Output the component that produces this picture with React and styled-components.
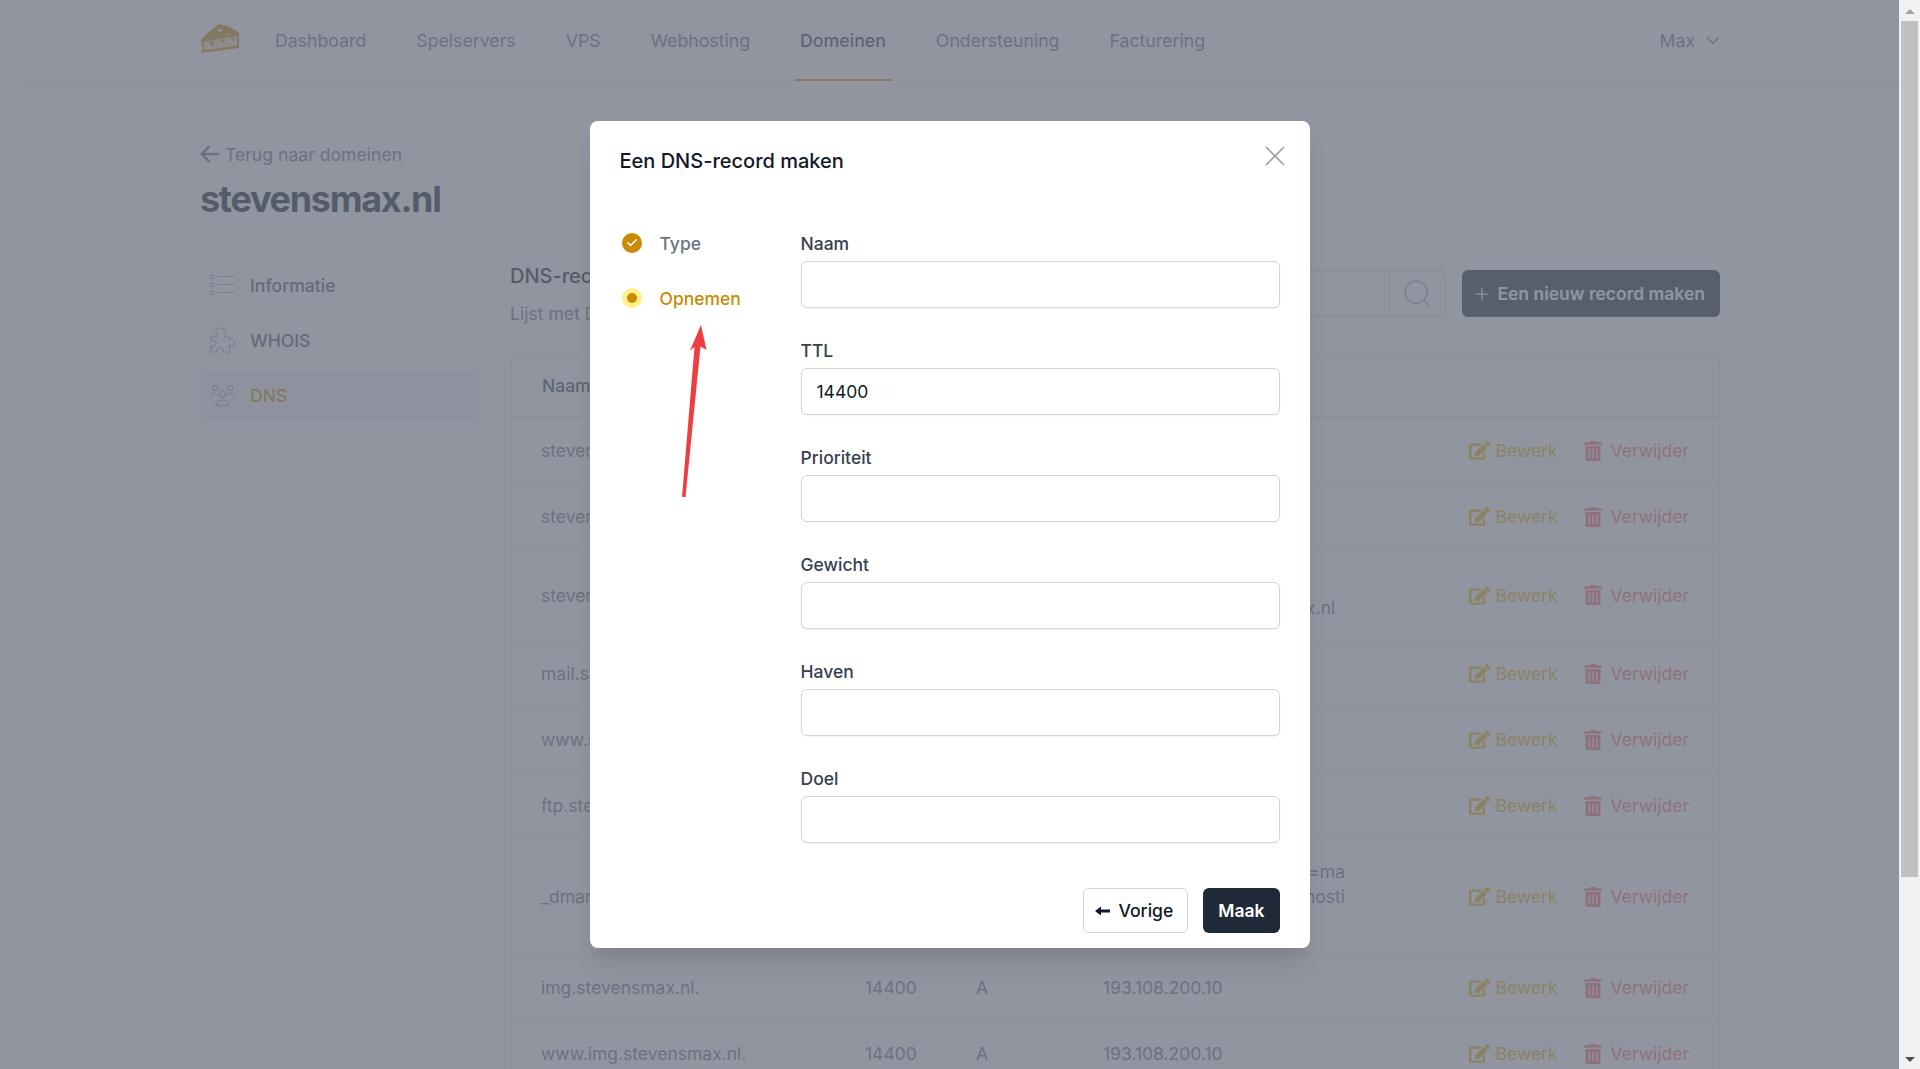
import React from "react";
import styled, { createGlobalStyle } from "styled-components";
import { Check, Plus, Search, X } from "lucide-react";
import { FaEdit, FaTrashAlt } from "react-icons/fa";
import { HiArrowLeft } from "react-icons/hi";

const GlobalStyle = createGlobalStyle`
  * { box-sizing: border-box; }
  html, body { margin: 0; padding: 0; height: 100%; overflow: hidden; }
  body {
    font-family: Inter, "Liberation Sans", sans-serif;
    font-size: 17.5px;
    color: #111827;
    background: #ffffff;
  }
`;

const Root = styled.div`
  display: flex;
  height: 100vh;
  overflow: hidden;
`;

const Page = styled.div`
  position: relative;
  flex: 1;
  min-width: 0;
  overflow: hidden;
`;

const Nav = styled.nav`
  display: flex;
  justify-content: space-between;
  height: 81px;
  margin-left: 21px;
  padding: 0 179px 0 180px;
  border-bottom: 1px solid #e5e7eb;
`;

const NavLeft = styled.div`
  display: flex;
  align-items: stretch;
  gap: 40px;
`;

const LogoLink = styled.a`
  display: flex;
  align-items: center;
  width: 38px;
  margin-right: -9px;
  padding-bottom: 3px;
`;

const NavItem = styled.a`
  display: flex;
  align-items: center;
  padding: 2px 5px 0;
  font-size: 17.72px;
  color: ${({ $active }) => ($active ? "#374151" : "#6b7280")};
  font-weight: ${({ $active }) => ($active ? 500 : 400)};
  border-bottom: 2px solid ${({ $active }) => ($active ? "#ca8a04" : "transparent")};
  margin-bottom: -1px;
`;

const UserMenu = styled.div`
  display: flex;
  align-items: center;
  gap: 11px;
  font-size: 17.6px;
  color: #6b7280;
`;

const Content = styled.main`
  padding: 61px 179px 0 201px;
`;

const BackLink = styled.a`
  display: flex;
  align-items: center;
  gap: 3px;
  height: 24px;
  margin-left: -3px;
  font-size: 17.6px;
  color: #6b7280;
`;

const Title = styled.h1`
  margin: 13px 0 0 -1px;
  font-size: 36px;
  line-height: 40px;
  font-weight: 700;
  letter-spacing: -1.3px;
  color: #111827;
`;

const Columns = styled.div`
  display: flex;
  gap: 31px;
  margin-top: 43px;
`;

const Sidebar = styled.aside`
  display: flex;
  flex-direction: column;
  gap: 7px;
  width: 279px;
  flex-shrink: 0;
`;

const SideItem = styled.a`
  display: flex;
  align-items: center;
  height: 48px;
  padding: 0 0 2px 9px;
  border-radius: 6px;
  font-size: 17.6px;
  font-weight: 500;
  color: ${({ $active }) => ($active ? "#ca8a04" : "#4b5563")};
  background: ${({ $active }) => ($active ? "#f3f4f6" : "transparent")};
`;

const SideIcon = styled.span`
  display: flex;
  width: 40px;
  color: #9ca3af;
`;

const MainCol = styled.section`
  flex: 1;
  min-width: 0;
`;

const MainHead = styled.div`
  display: flex;
  justify-content: space-between;
  align-items: flex-start;
`;

const MainTitle = styled.h2`
  margin: 0 0 0 -1px;
  font-size: 20px;
  line-height: 28px;
  font-weight: 500;
  color: #111827;
`;

const MainSub = styled.p`
  margin: 12px 0 0 -1px;
  font-size: 17.6px;
  line-height: 24px;
  color: #6b7280;
`;

const HeadActions = styled.div`
  display: flex;
  gap: 16px;
  margin-top: 8px;
`;

const SearchGroup = styled.div`
  display: flex;
  height: 47px;
  border: 1px solid #d1d5db;
  border-radius: 6px;
`;

const SearchInput = styled.input`
  width: 200px;
  border: 0;
  background: transparent;
`;

const SearchButton = styled.button`
  display: flex;
  align-items: center;
  justify-content: center;
  width: 56px;
  border: 0;
  border-left: 1px solid #d1d5db;
  background: transparent;
  color: #9ca3af;
  padding: 0;
`;

const PrimaryButton = styled.button`
  display: flex;
  align-items: center;
  gap: 5px;
  height: 47px;
  padding: 0 15px 0 10px;
  border: 0;
  border-radius: 6px;
  background: #1f2937;
  color: #ffffff;
  font-family: inherit;
  font-size: 17.5px;
  font-weight: 600;
`;

const Table = styled.div`
  margin-top: 28px;
  border: 1px solid #e5e7eb;
  border-radius: 8px;
`;

const GRID = "323px 111px 127px 1fr 232px";

const HeadRow = styled.div`
  display: grid;
  grid-template-columns: ${GRID};
  align-items: center;
  height: 63px;
  padding: 0 30px 2px;
  border-bottom: 1px solid #d1d5db;
  font-weight: 500;
  color: #374151;
`;

const Row = styled.div`
  display: grid;
  grid-template-columns: ${GRID};
  align-items: center;
  padding: 20px 30px;
  border-bottom: 1px solid #e5e7eb;
  line-height: 25px;
  color: #6b7280;
`;

const NameCell = styled.span`
  margin-left: -1px;
`;

const ValueCell = styled.div`
  width: 242px;
  white-space: nowrap;
`;

const ValueLine = styled.div`
  text-align: ${({ $end }) => ($end ? "right" : "left")};
`;

const Actions = styled.div`
  display: flex;
  align-items: center;
  justify-content: flex-end;
  gap: 25px;
`;

const Action = styled.a`
  display: flex;
  align-items: center;
  gap: ${({ $danger }) => ($danger ? "8px" : "6px")};
  color: ${({ $danger }) => ($danger ? "#f87171" : "#eab308")};
`;

const Overlay = styled.div`
  position: absolute;
  inset: 0;
  display: flex;
  justify-content: center;
  align-items: flex-start;
  padding-top: 121px;
  background: rgba(107, 114, 128, 0.75);
`;

const Modal = styled.div`
  position: relative;
  width: 720px;
  height: 827px;
  padding: 28px 30px 15px;
  border-radius: 8px;
  background: #ffffff;
  box-shadow: 0 20px 25px -5px rgba(0, 0, 0, 0.1), 0 10px 10px -5px rgba(0, 0, 0, 0.04);
`;

const ModalTitle = styled.h3`
  margin: 0;
  font-size: 20px;
  line-height: 24px;
  font-weight: 500;
  color: #111827;
`;

const CloseButton = styled.button`
  position: absolute;
  top: 18px;
  right: 18px;
  display: flex;
  padding: 0;
  border: 0;
  background: transparent;
  color: #9ca3af;
`;

const ModalBody = styled.div`
  display: flex;
  margin-top: 58px;
`;

const Steps = styled.ol`
  display: flex;
  flex-direction: column;
  gap: 31px;
  width: 181px;
  margin: 0;
  padding: 0 0 0 2px;
  list-style: none;
`;

const Step = styled.li`
  display: flex;
  align-items: center;
  gap: 18px;
  height: 24px;
  font-weight: 500;
  color: ${({ $current }) => ($current ? "#ca8a04" : "#6b7280")};
`;

const StepDone = styled.span`
  display: flex;
  align-items: center;
  justify-content: center;
  width: 20px;
  height: 20px;
  border-radius: 50%;
  background: #ca8a04;
  color: #ffffff;
`;

const StepNow = styled.span`
  display: flex;
  align-items: center;
  justify-content: center;
  width: 20px;
  height: 20px;
  border-radius: 50%;
  background: #fef08a;
  &::after {
    content: "";
    width: 10px;
    height: 10px;
    border-radius: 50%;
    background: #ca8a04;
  }
`;

const Form = styled.form`
  display: flex;
  flex-direction: column;
  gap: 30px;
  flex: 1;
`;

const Field = styled.label`
  display: flex;
  flex-direction: column;
  gap: 5px;
`;

const FieldLabel = styled.span`
  padding-top: 1px;
  line-height: 24px;
  font-weight: 500;
  color: #374151;
`;

const TextInput = styled.input`
  height: 47px;
  padding: 0 15px;
  border: 1px solid #d1d5db;
  border-radius: 6px;
  box-shadow: 0 1px 2px rgba(0, 0, 0, 0.05);
  background: #ffffff;
  font-family: inherit;
  font-size: 17.5px;
  color: #111827;
`;

const ModalFooter = styled.div`
  display: flex;
  justify-content: flex-end;
  gap: 15px;
  margin-top: 45px;
`;

const BackButton = styled.button`
  display: flex;
  align-items: center;
  gap: 8px;
  height: 45px;
  padding: 0 14px 0 11px;
  border: 1px solid #d1d5db;
  border-radius: 6px;
  background: #ffffff;
  color: #111827;
  font-family: inherit;
  font-size: 17.6px;
  font-weight: 500;
`;

const SubmitButton = styled.button`
  height: 45px;
  padding: 0 15px;
  border: 0;
  border-radius: 6px;
  background: #1f2937;
  color: #ffffff;
  font-family: inherit;
  font-size: 17.5px;
  font-weight: 600;
`;

const Annotation = styled.svg`
  position: absolute;
  left: 90px;
  top: 202px;
`;

const Scrollbar = styled.div`
  display: flex;
  flex-direction: column;
  align-items: center;
  width: 21px;
  flex-shrink: 0;
  background: #f1f1f1;
`;

const ScrollArrow = styled.div`
  flex-shrink: 0;
  width: 0;
  height: 0;
  margin: 9px 0 7px;
  border-left: 5px solid transparent;
  border-right: 5px solid transparent;
  border-${({ $down }) => ($down ? "top" : "bottom")}: 5px solid ${({ $down }) => ($down ? "#505050" : "#a3a3a3")};
`;

const ScrollThumb = styled.div`
  width: 17px;
  height: 856px;
  background: #c1c1c1;
`;

const ScrollGap = styled.div`
  flex: 1;
`;

const CheeseLogo = () => (
  <svg width="38" height="29" viewBox="0 0 38 29" fill="none">
    <path
      fillRule="evenodd"
      d="M0.5 15.5 L6 9.5 L18 0 C26 1 33 4.5 38 9 L38 11 Z M19 5 a2.2 1.4 0 1 0 0.01 0 Z M27 10 a1.6 1.2 0 1 0 0.01 0 Z"
      fill="#ca8a04"
    />
    <path d="M2.5 18 L2.5 26.2 L36 21.8 L36 12 Z" fill="#ca8a04" fillOpacity="0.3" />
    <path
      fillRule="evenodd"
      d="M0 15 L38 9.5 L38 24 L0.5 29 L0.5 26 C2 25 2 22 0.5 21 Z M2.5 18 L2.5 26.2 L36 21.8 L36 12 Z"
      fill="#ca8a04"
    />
    <circle cx="11" cy="19.5" r="2.4" fill="#ca8a04" />
    <circle cx="22" cy="17" r="1.4" fill="#ca8a04" />
    <circle cx="32" cy="15.4" r="1.3" fill="#ca8a04" />
  </svg>
);

const ListIcon = () => (
  <svg width="25" height="22" viewBox="0 0 25 22" fill="none" stroke="currentColor" strokeWidth="1.1">
    <rect x="0.5" y="1" width="3.5" height="3.5" rx="0.8" />
    <rect x="0.5" y="9" width="3.5" height="3.5" rx="0.8" />
    <rect x="0.5" y="17" width="3.5" height="3.5" rx="0.8" />
    <path d="M8 2.5H24.5M8 10.5H24.5M8 18.5H24.5" />
  </svg>
);

const PuzzleIcon = () => (
  <svg width="25" height="26" viewBox="0 0 25 26" fill="none" stroke="currentColor" strokeWidth="1.1">
    <path d="M1 10H7.5C7 8 6 7 6 5C6 2.5 8.5 1 11 1C13.5 1 16 2.5 16 5C16 7 15 8 14.5 10H19.5V12.5C20.5 11.5 24.5 12 24.5 15.5C24.5 19 20.5 19.5 19.5 18.5V25H12.5C13.5 22.5 12.5 20 10 20C7.5 20 6.5 22.5 7.5 25H1V19C3.5 20 6 18.5 6 16C6 13.5 3.5 12.5 1 13.5Z" />
  </svg>
);

const UsersIcon = () => (
  <svg width="25" height="21" viewBox="0 0 25 21" fill="none" stroke="currentColor" strokeWidth="1.1">
    <circle cx="5" cy="3.2" r="2.6" />
    <circle cx="20" cy="3.2" r="2.6" />
    <circle cx="12.5" cy="9" r="3" />
    <path d="M6 20.5C6 17 8.5 15 12.5 15C16.5 15 19 17 19 20.5Z" />
    <path d="M0.5 12C1 9.5 3 8.5 5 8.5C6.5 8.5 7.5 9 8.5 10M24.5 12C24 9.5 22 8.5 20 8.5C18.5 8.5 17.5 9 16.5 10" />
  </svg>
);

const ChevronIcon = () => (
  <svg width="14" height="9" viewBox="0 0 14 9" fill="none" stroke="currentColor" strokeWidth="1.5">
    <path d="M1 1L7 7.5L13 1" />
  </svg>
);

const ThickArrowLeft = () => (
  <svg width="15" height="10" viewBox="0 0 15 10" fill="currentColor">
    <path d="M0 5L6 0.5V3.5H15V6.5H6V9.5Z" />
  </svg>
);

const navLinks = ["Dashboard", "Spelservers", "VPS", "Webhosting", "Domeinen", "Ondersteuning", "Facturering"];

const records = [
  { name: "stevensmax.nl.", ttl: 14400, type: "A", value: ["193.108.200.10"] },
  { name: "stevensmax.nl.", ttl: 14400, type: "NS", value: ["ns1.hosting.nl"] },
  { name: "stevensmax.nl.", ttl: 14400, type: "TXT", value: ["v=spf1 mx", "include:email.stevensmax.nl"] },
  { name: "mail.stevensmax.nl.", ttl: 14400, type: "A", value: ["193.108.200.10"] },
  { name: "www.stevensmax.nl.", ttl: 14400, type: "A", value: ["193.108.200.10"] },
  { name: "ftp.stevensmax.nl.", ttl: 14400, type: "A", value: ["193.108.200.10"] },
  {
    name: "_dmarc.stevensmax.nl.",
    ttl: 14400,
    type: "TXT",
    value: ["v=DMARC1; p=none; rua=ma", "ilto:dmarc@mail.hosti", "ng.nl"],
    endLines: 2,
  },
  { name: "img.stevensmax.nl.", ttl: 14400, type: "A", value: ["193.108.200.10"] },
  { name: "www.img.stevensmax.nl.", ttl: 14400, type: "A", value: ["193.108.200.10"] },
];

const fields = [
  { label: "Naam", value: "" },
  { label: "TTL", value: "14400" },
  { label: "Prioriteit", value: "" },
  { label: "Gewicht", value: "" },
  { label: "Haven", value: "" },
  { label: "Doel", value: "" },
];

const App = () => {
  return (
    <Root>
      <GlobalStyle />
      <Page>
        <Nav>
          <NavLeft>
            <LogoLink>
              <CheeseLogo />
            </LogoLink>
            {navLinks.map((link) => (
              <NavItem key={link} $active={link === "Domeinen"}>
                {link}
              </NavItem>
            ))}
          </NavLeft>
          <UserMenu>
            Max
            <ChevronIcon />
          </UserMenu>
        </Nav>

        <Content>
          <BackLink>
            <HiArrowLeft size={24} />
            Terug naar domeinen
          </BackLink>
          <Title>stevensmax.nl</Title>
          <Columns>
            <Sidebar>
              <SideItem>
                <SideIcon>
                  <ListIcon />
                </SideIcon>
                Informatie
              </SideItem>
              <SideItem>
                <SideIcon>
                  <PuzzleIcon />
                </SideIcon>
                WHOIS
              </SideItem>
              <SideItem $active>
                <SideIcon>
                  <UsersIcon />
                </SideIcon>
                DNS
              </SideItem>
            </Sidebar>
            <MainCol>
              <MainHead>
                <div>
                  <MainTitle>DNS-records</MainTitle>
                  <MainSub>Lijst met DNS-records</MainSub>
                </div>
                <HeadActions>
                  <SearchGroup>
                    <SearchInput />
                    <SearchButton>
                      <Search size={33} strokeWidth={1} />
                    </SearchButton>
                  </SearchGroup>
                  <PrimaryButton>
                    <Plus size={20} strokeWidth={1.5} />
                    Een nieuw record maken
                  </PrimaryButton>
                </HeadActions>
              </MainHead>
              <Table>
                <HeadRow>
                  <span>Naam</span>
                  <span>TTL</span>
                  <span>Type</span>
                  <span>Waarde</span>
                  <span />
                </HeadRow>
                {records.map((record) => (
                  <Row key={record.name + record.type}>
                    <NameCell>{record.name}</NameCell>
                    <span>{record.ttl}</span>
                    <span>{record.type}</span>
                    <ValueCell>
                      {record.value.map((line, i) => (
                        <ValueLine key={line} $end={i < (record.endLines || 0)}>
                          {line}
                        </ValueLine>
                      ))}
                    </ValueCell>
                    <Actions>
                      <Action>
                        <FaEdit size={21} />
                        Bewerk
                      </Action>
                      <Action $danger>
                        <FaTrashAlt size={20} />
                        Verwijder
                      </Action>
                    </Actions>
                  </Row>
                ))}
              </Table>
            </MainCol>
          </Columns>
        </Content>

        <Overlay>
          <Modal>
            <ModalTitle>Een DNS-record maken</ModalTitle>
            <CloseButton>
              <X size={34} strokeWidth={1.2} />
            </CloseButton>
            <ModalBody>
              <Steps>
                <Step>
                  <StepDone>
                    <Check size={12} strokeWidth={3.5} />
                  </StepDone>
                  Type
                </Step>
                <Step $current>
                  <StepNow />
                  Opnemen
                </Step>
              </Steps>
              <Form>
                {fields.map((field) => (
                  <Field key={field.label}>
                    <FieldLabel>{field.label}</FieldLabel>
                    <TextInput defaultValue={field.value} />
                  </Field>
                ))}
              </Form>
            </ModalBody>
            <ModalFooter>
              <BackButton>
                <ThickArrowLeft />
                Vorige
              </BackButton>
              <SubmitButton>Maak</SubmitButton>
            </ModalFooter>
            <Annotation width="30" height="176" viewBox="0 0 30 176">
              <path d="M21 2 L26.5 27 L20.5 23.5 L5.5 174 L2 174 L14.5 24 L10 27.5 Z" fill="#ef3e42" />
            </Annotation>
          </Modal>
        </Overlay>
      </Page>
      <Scrollbar>
        <ScrollArrow />
        <ScrollThumb />
        <ScrollGap />
        <ScrollArrow $down />
      </Scrollbar>
    </Root>
  );
};

export default App;
